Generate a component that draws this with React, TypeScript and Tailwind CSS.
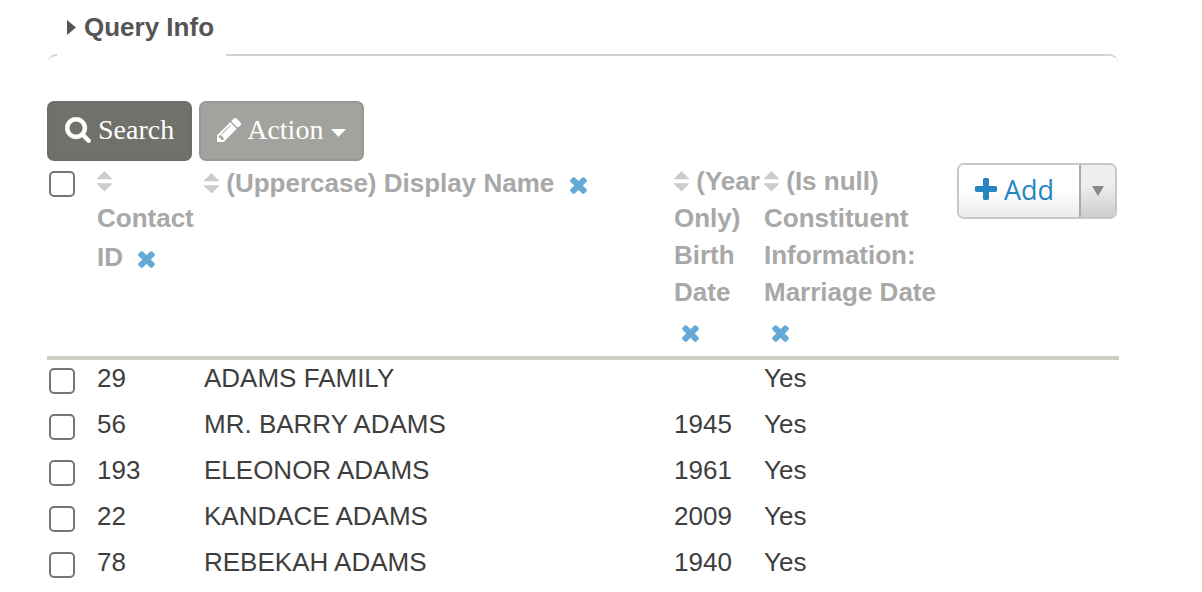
import React from 'react';

const contacts = [
  { id: 29, name: 'ADAMS FAMILY', birth: '', marriage: 'Yes' },
  { id: 56, name: 'MR. BARRY ADAMS', birth: '1945', marriage: 'Yes' },
  { id: 193, name: 'ELEONOR ADAMS', birth: '1961', marriage: 'Yes' },
  { id: 22, name: 'KANDACE ADAMS', birth: '2009', marriage: 'Yes' },
  { id: 78, name: 'REBEKAH ADAMS', birth: '1940', marriage: 'Yes' },
];

function SearchIcon() {
  return (
    <svg viewBox="49 113 1694 1694" className="size-[26px]" fill="currentColor" stroke="currentColor" strokeWidth="40" aria-hidden="true">
      <path d="M1216 832q0-185-131.5-316.5t-316.5-131.5-316.5 131.5-131.5 316.5 131.5 316.5 316.5 131.5 316.5-131.5 131.5-316.5zm512 832q0 52-38 90t-90 38q-54 0-90-38l-343-342q-179 124-399 124-143 0-273.5-55.5t-225-150-150-225-55.5-273.5 55.5-273.5 150-225 225-150 273.5-55.5 273.5 55.5 225 150 150 225 55.5 273.5q0 220-124 399l343 343q37 37 37 90z" />
    </svg>
  );
}

function PencilIcon() {
  return (
    <svg viewBox="128 149 1515 1515" className="size-6" fill="currentColor" aria-hidden="true">
      <path d="M491 1536l91-91-235-235-91 91v107h128v128h107zm523-928q0-22-22-22-10 0-17 7l-542 542q-7 7-7 17 0 22 22 22 10 0 17-7l542-542q7-7 7-17zm-54-192l416 416-832 832h-416v-416zm683 96q0 53-37 90l-166 166-416-416 166-165q36-38 90-38 53 0 91 38l235 234q37 39 37 91z" />
    </svg>
  );
}

function PlusIcon() {
  return (
    <svg viewBox="192 128 1408 1408" className="size-[22px]" fill="currentColor" aria-hidden="true">
      <path d="M1600 736v192q0 40-28 68t-68 28h-416v416q0 40-28 68t-68 28h-192q-40 0-68-28t-28-68v-416h-416q-40 0-68-28t-28-68v-192q0-40 28-68t68-28h416v-416q0-40 28-68t68-28h192q40 0 68 28t28 68v416h416q40 0 68 28t28 68z" />
    </svg>
  );
}

function RemoveButton({ label }: { label: string }) {
  return (
    <button type="button" aria-label={label} className="inline-flex h-[45px] items-center px-2 align-middle text-[#65a9d7]">
      <svg viewBox="252 316 1288 1288" className="size-[17px]" fill="currentColor" stroke="currentColor" strokeWidth="80" aria-hidden="true">
        <path d="M1490 1322q0 40-28 68l-136 136q-28 28-68 28t-68-28l-294-294-294 294q-28 28-68 28t-68-28l-136-136q-28-28-28-68t28-68l294-294-294-294q-28-28-28-68t28-68l136-136q28-28 68-28t68 28l294 294 294-294q28-28 68-28t68 28l136 136q28 28 28 68t-28 68l-294 294 294 294q28 28 28 68z" />
      </svg>
    </button>
  );
}

function SortIcon() {
  return (
    <svg viewBox="0 0 15 21" className="inline-block h-[21px] w-[15px] align-[-2px]" fill="#cccccc" aria-hidden="true">
      <path d="M7.5 0L15 7.4V8.2H0V7.4zM0 12.2H15V13L7.5 20.4L0 13z" />
    </svg>
  );
}

function Heading({ title }: { title: string }) {
  return (
    <th scope="col" className="text-left align-top font-bold">
      <SortIcon /> {title} <RemoveButton label={`Remove ${title}`} />
    </th>
  );
}

function Checkbox({ label }: { label: string }) {
  return (
    <input
      type="checkbox"
      aria-label={label}
      className="ml-0.5 mt-2 block size-[26px] appearance-none rounded-[5px] border-2 border-[#767676] bg-white checked:bg-[#2786c2]"
    />
  );
}

export default function App() {
  return (
    <main className="bg-white pl-[47px] pr-[83px] font-['Liberation_Sans',Arial,sans-serif] text-[26px] leading-[37px] text-[#3e3e3e]">
      <button type="button" className="ml-5 flex h-[54px] items-center gap-2 font-bold text-[#555555]">
        <svg viewBox="0 0 9 15" className="h-[15px] w-[9px]" fill="currentColor" aria-hidden="true">
          <path d="M0 0L9 7.5L0 15z" />
        </svg>
        Query Info
      </button>
      <div className="flex justify-between">
        <div className="h-2.5 w-2.5 rounded-tl-[10px] border-t-2 border-[#d3d3d3]" />
        <div className="ml-[169px] h-2.5 flex-1 rounded-tr-[10px] border-t-2 border-[#d3d3d3]" />
      </div>

      <div className="mt-[37px] flex gap-[7px] font-['Liberation_Serif','Times_New_Roman',serif] text-[28px] text-white">
        <button type="button" className="flex h-[60px] items-center gap-[7px] rounded-[7px] border-2 border-[#6d6e68] bg-[#70716b] px-4 pb-0.5">
          <SearchIcon />
          <span className="pb-0.5">Search</span>
        </button>
        <button type="button" className="flex h-[60px] items-center gap-1.5 rounded-[7px] border-2 border-[#989894] bg-[#a2a29e] px-4 pb-0.5">
          <PencilIcon />
          <span className="pb-0.5">Action</span>
          <svg viewBox="0 0 15 8" className="ml-0.5 mt-1.5 h-2 w-[15px]" fill="currentColor" aria-hidden="true">
            <path d="M0 0H15L7.5 8z" />
          </svg>
        </button>
      </div>

      <table className="w-full table-fixed border-separate border-spacing-0">
        <colgroup>
          <col className="w-[50px]" />
          <col className="w-[107px]" />
          <col />
          <col className="w-[90px]" />
          <col className="w-[193px]" />
          <col className="w-[162px]" />
        </colgroup>
        <thead>
          <tr className="text-[#a8a8a8] *:border-b-4 *:border-[#cecec2] *:pt-0.5">
            <td className="align-top">
              <Checkbox label="Select all" />
            </td>
            <Heading title="Contact ID" />
            <Heading title="(Uppercase) Display Name" />
            <Heading title="(Year Only) Birth Date" />
            <Heading title="(Is null) Constituent Information: Marriage Date" />
            <td className="align-top">
              <div className="mr-0.5 flex h-14 overflow-hidden rounded-[7px] border-2 border-[#c7c7c7] font-['Open_Sans',sans-serif] text-[27px]">
                <button type="button" className="flex flex-1 items-center gap-[7px] bg-linear-to-b from-white from-50% to-[#ebebeb] pb-1 pl-4 text-[#2786c2]">
                  <PlusIcon />
                  Add
                </button>
                <button type="button" aria-label="More add options" className="flex w-9 items-center justify-center border-l-2 border-[#aaaaaa] bg-linear-to-b from-[#eeeeee] from-40% to-[#cccccc] text-[#888888]">
                  <svg viewBox="0 0 12 10" className="h-2.5 w-3" fill="currentColor" aria-hidden="true">
                    <path d="M0 0H12L6 10z" />
                  </svg>
                </button>
              </div>
            </td>
          </tr>
        </thead>
        <tbody>
          {contacts.map((contact) => (
            <tr key={contact.id} className="h-[46px] *:align-top">
              <td>
                <Checkbox label={`Select ${contact.name}`} />
              </td>
              <td>{contact.id}</td>
              <td>{contact.name}</td>
              <td>{contact.birth}</td>
              <td>{contact.marriage}</td>
              <td />
            </tr>
          ))}
        </tbody>
      </table>
    </main>
  );
}
